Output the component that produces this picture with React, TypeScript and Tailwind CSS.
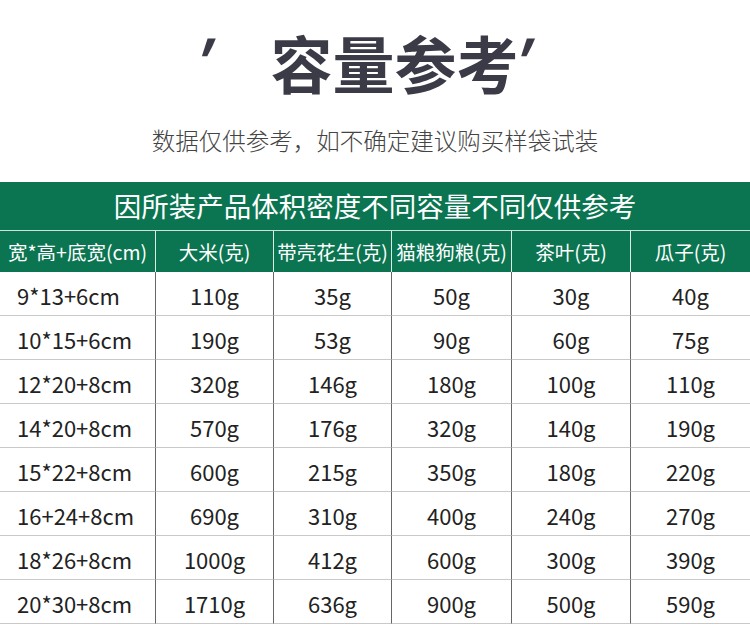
const header = ["宽*高+底宽(cm)", "大米(克)", "带壳花生(克)", "猫粮狗粮(克)", "茶叶(克)", "瓜子(克)"];

const rows = [
  ["9*13+6cm", "110g", "35g", "50g", "30g", "40g"],
  ["10*15+6cm", "190g", "53g", "90g", "60g", "75g"],
  ["12*20+8cm", "320g", "146g", "180g", "100g", "110g"],
  ["14*20+8cm", "570g", "176g", "320g", "140g", "190g"],
  ["15*22+8cm", "600g", "215g", "350g", "180g", "220g"],
  ["16+24+8cm", "690g", "310g", "400g", "240g", "270g"],
  ["18*26+8cm", "1000g", "412g", "600g", "300g", "390g"],
  ["20*30+8cm", "1710g", "636g", "900g", "500g", "590g"],
];

const cols = "grid grid-cols-[156px_118px_118px_120px_119px_119px]";

export default function App() {
  return (
    <div className="w-[750px] h-[642px] bg-white overflow-hidden font-['Noto_Sans_CJK_SC',sans-serif]">
      {/* Title */}
      <div className="h-[110px] pt-[20px] pr-[22px] flex justify-center items-start text-[#3a3b46]">
        <span className="inline-block text-[56px] leading-[80px] font-bold italic -translate-x-[10px] -translate-y-[2px]">′</span>
        <span className="ml-[52px] text-[62px] leading-[84px] font-bold">容量参考</span>
        <span className="inline-block text-[56px] leading-[80px] font-bold italic -ml-[9px] -translate-y-[2px]">′</span>
      </div>
      <p className="h-[72px] pt-[12px] text-center text-[23.5px] leading-[36px] text-[#444] font-light">
        数据仅供参考，如不确定建议购买样袋试装
      </p>

      {/* Table */}
      <div className="bg-[#0b7551] h-[48px] flex items-center justify-center text-white text-[27.5px] leading-none">
        因所装产品体积密度不同容量不同仅供参考
      </div>
      <div className="h-px bg-[#cfe3d9]" />
      <div className={`${cols} bg-[#0b7551] h-[41px] text-white text-[19.5px]`}>
        {header.map((h, i) => (
          <div
            key={i}
            className={`flex items-center whitespace-nowrap ${i === 0 ? "pl-[8px]" : "justify-center"} ${i < header.length - 1 ? "border-r border-[#d9ebe2]" : ""}`}
          >
            {h}
          </div>
        ))}
      </div>
      {rows.map((r, ri) => (
        <div key={ri} className={`${cols} h-[44px] text-[22px] text-[#222]`}>
          {r.map((c, ci) => (
            <div
              key={ci}
              className={`flex items-center pt-[4px] border-b border-[#c9c9c9] ${ci === 0 ? "pl-[17px]" : "justify-center"} ${ci < r.length - 1 ? "border-r border-r-[#666]" : ""}`}
            >
              {c}
            </div>
          ))}
        </div>
      ))}
    </div>
  );
}
